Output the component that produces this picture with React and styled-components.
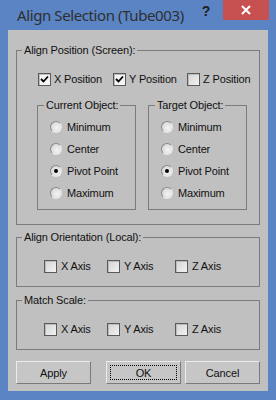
import React from 'react'
import styled, { createGlobalStyle } from 'styled-components'

const GlobalStyle = createGlobalStyle`
  html, body {
    margin: 0;
    padding: 0;
    background: #5b84c4;
  }
`

const Window = styled.div`
  width: 276px;
  height: 400px;
  background: #5b84c4;
  box-sizing: border-box;
  font-family: "Liberation Sans", Arial, sans-serif;
  font-size: 11px;
  letter-spacing: -0.15px;
  color: #111;
`

const TitleBar = styled.div`
  display: flex;
  align-items: flex-start;
  height: 30px;
`

const Title = styled.div`
  font-family: "Noto Sans", "Open Sans", sans-serif;
  font-size: 15px;
  letter-spacing: -0.4px;
  line-height: 20px;
  color: #2f2f2f;
  padding: 5px 0 0 17px;
  white-space: nowrap;
`

const HelpButton = styled.div`
  margin-left: auto;
  width: 14px;
  padding-top: 3px;
  font-family: "Liberation Sans", sans-serif;
  font-weight: bold;
  font-size: 14px;
  line-height: 16px;
  color: #1e1e1e;
  text-align: center;
  margin-right: 10px;
`

const CloseButton = styled.div`
  width: 46px;
  height: 20px;
  background: #c75050;
  margin-right: 7px;
  display: flex;
  align-items: center;
  justify-content: center;
`

const Client = styled.div`
  margin: 0 8px;
  height: 361px;
  background: #c0c0c0;
  box-sizing: border-box;
  padding: 13px 8px 8px;
  display: flex;
  flex-direction: column;
`

const Group = styled.fieldset`
  margin: ${p => p.$top || 0}px 0 0;
  padding: 0;
  border: 1px solid #7c7c7c;
  min-inline-size: 0;
`

const Legend = styled.legend`
  margin-left: ${p => p.$indent || 5}px;
  padding: 0 2px;
  line-height: 14px;
  height: 14px;
`

const GroupBody = styled.div`
  padding: ${p => p.$pad};
`

const CheckRow = styled.div`
  display: grid;
  grid-template-columns: ${p => p.$cols};
  height: 14px;
  align-items: center;
  padding-left: ${p => p.$indent || 0}px;
`

const Option = styled.label`
  display: flex;
  align-items: center;
  gap: ${p => p.$gap || 4}px;
  height: 14px;
  line-height: 14px;
  white-space: nowrap;
`

const Box = styled.span`
  width: 13px;
  height: 13px;
  box-sizing: border-box;
  border: 1px solid #5a5a5a;
  background: ${p => (p.$checked ? '#f4f4f4' : 'linear-gradient(135deg, #d4d4d4, #f2f2f2)')};
  box-shadow: inset 1px 1px 0 #bcbcbc;
  display: flex;
  align-items: center;
  justify-content: center;
  flex: none;
`

const Radio = styled.span`
  width: 12px;
  height: 12px;
  box-sizing: border-box;
  border-radius: 50%;
  border: 1px solid;
  border-color: #8a8a8a #e8e8e8 #e8e8e8 #8a8a8a;
  background: radial-gradient(circle at 60% 60%, #f4f4f4 0%, #dedede 60%, #c8c8c8 100%);
  display: flex;
  align-items: center;
  justify-content: center;
  flex: none;
`

const Dot = styled.span`
  width: 4px;
  height: 4px;
  border-radius: 50%;
  background: #000;
`

const SubRow = styled.div`
  display: flex;
  gap: 12px;
  margin-top: 12px;
  padding-left: 20px;
`

const SubGroup = styled.fieldset`
  margin: 0;
  padding: 0;
  width: 99px;
  box-sizing: border-box;
  border: 1px solid #7c7c7c;
  min-inline-size: 0;
`

const RadioList = styled.div`
  display: flex;
  flex-direction: column;
  gap: 8px;
  padding: 8px 0 9px 12px;
`

const ButtonRow = styled.div`
  display: flex;
  justify-content: space-between;
  margin-top: 11px;
`

const ButtonPair = styled.div`
  display: flex;
  gap: 4px;
`

const Button = styled.button`
  width: 75px;
  height: 23px;
  box-sizing: border-box;
  padding: 0;
  background: #c6c6c6;
  border: 1px solid;
  border-color: #ececec #7a7a7a #7a7a7a #ececec;
  font-family: inherit;
  font-size: 11px;
  letter-spacing: inherit;
  color: #111;
  display: flex;
  align-items: center;
  justify-content: center;
`

const Focus = styled.span`
  width: 67px;
  height: 15px;
  border: 1px dotted #000;
  box-sizing: border-box;
  display: flex;
  align-items: center;
  justify-content: center;
`

const Check = ({ checked, label, gap }) => (
  <Option $gap={gap}>
    <Box $checked={checked}>
      {checked && (
        <svg width="9" height="9" viewBox="0 0 9 9">
          <path d="M1 4 L3.5 6.5 L8 1.5" stroke="#000" strokeWidth="1.8" fill="none" />
        </svg>
      )}
    </Box>
    {label}
  </Option>
)

const RadioOption = ({ checked, label }) => (
  <Option $gap={5}>
    <Radio>{checked && <Dot />}</Radio>
    {label}
  </Option>
)

const points = ['Minimum', 'Center', 'Pivot Point', 'Maximum']

const ObjectGroup = ({ title }) => (
  <SubGroup>
    <Legend $indent={6}>{title}</Legend>
    <RadioList>
      {points.map(p => (
        <RadioOption key={p} label={p} checked={p === 'Pivot Point'} />
      ))}
    </RadioList>
  </SubGroup>
)

const AxisGroup = ({ title, top }) => (
  <Group $top={top}>
    <Legend>{title}</Legend>
    <GroupBody $pad="15px 0 13px 27px">
      <CheckRow $cols="63px 68px auto">
        <Check label="X Axis" />
        <Check label="Y Axis" />
        <Check label="Z Axis" />
      </CheckRow>
    </GroupBody>
  </Group>
)

export default function App() {
  return (
    <Window>
      <GlobalStyle />
      <TitleBar>
        <Title>Align Selection (Tube003)</Title>
        <HelpButton>?</HelpButton>
        <CloseButton>
          <svg width="10" height="10" viewBox="0 0 10 10">
            <path d="M1 1 L9 9 M9 1 L1 9" stroke="#fff" strokeWidth="2" />
          </svg>
        </CloseButton>
      </TitleBar>
      <Client>
        <Group>
          <Legend>Align Position (Screen):</Legend>
          <GroupBody $pad="15px 0 14px 0">
            <CheckRow $cols="75px 74px auto" $indent={21}>
              <Check checked label="X Position" gap={3} />
              <Check checked label="Y Position" gap={3} />
              <Check label="Z Position" gap={3} />
            </CheckRow>
            <SubRow>
              <ObjectGroup title="Current Object:" />
              <ObjectGroup title="Target Object:" />
            </SubRow>
          </GroupBody>
        </Group>
        <AxisGroup title="Align Orientation (Local):" top={5} />
        <AxisGroup title="Match Scale:" top={6} />
        <ButtonRow>
          <Button>Apply</Button>
          <ButtonPair>
            <Button>
              <Focus>OK</Focus>
            </Button>
            <Button>Cancel</Button>
          </ButtonPair>
        </ButtonRow>
      </Client>
    </Window>
  )
}
